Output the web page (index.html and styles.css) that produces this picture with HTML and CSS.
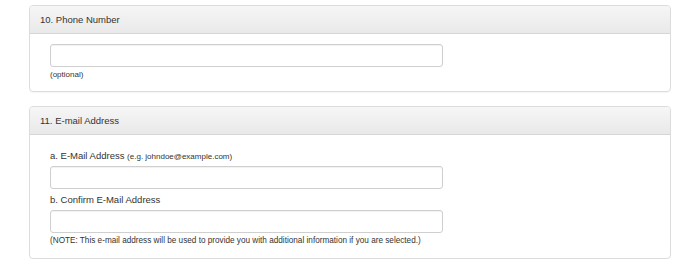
FILE: index.html
```html
<!DOCTYPE html>
<html lang="en">
<head>
    <meta charset="UTF-8">
    <title>Application Form</title>
    <link rel="stylesheet" href="styles.css">
</head>
<body>
    <div class="form-wrap">
        <!-- Phone -->
        <div class="panel">
            <div class="panel-heading">10. Phone Number</div>
            <div class="panel-body phone">
                <input type="text" class="field">
                <p class="help">(optional)</p>
            </div>
        </div>

        <!-- Email -->
        <div class="panel">
            <div class="panel-heading">11. E-mail Address</div>
            <div class="panel-body email">
                <label class="label">a. E-Mail Address <small>(e.g. johndoe@example.com)</small></label>
                <input type="text" class="field">
                <label class="label">b. Confirm E-Mail Address</label>
                <input type="text" class="field">
                <p class="help note">(NOTE: This e-mail address will be used to provide you with additional information if you are selected.)</p>
            </div>
        </div>
    </div>
</body>
</html>
```

FILE: styles.css
```css
body {
    font-family: 'Liberation Sans', Arial, sans-serif;
    color: #333;
    background-color: #fff;
    margin: 0;
}

.form-wrap {
    width: 642px;
    margin-left: 29px;
    padding-top: 5px;
    display: flex;
    flex-direction: column;
    gap: 14px;
}

.panel {
    border: 1px solid #dcdcdc;
    border-radius: 4px;
    box-shadow: 0 1px 1px rgba(0, 0, 0, 0.04);
    overflow: hidden;
}

.panel-heading {
    height: 27px;
    line-height: 27px;
    padding-left: 10px;
    font-size: 9.5px;
    color: #333;
    background: linear-gradient(to bottom, #f6f6f6, #e9e9e9);
    border-bottom: 1px solid #d6d6d6;
}

.panel-body {
    display: flex;
    flex-direction: column;
    align-items: flex-start;
}

.panel-body.phone {
    padding: 10px 20px 11px;
}

.panel-body.email {
    padding: 14px 20px 12px;
}

.field {
    width: 393px;
    height: 23px;
    box-sizing: border-box;
    border: 1px solid #cfcfcf;
    border-radius: 3px;
    box-shadow: inset 0 1px 1px rgba(0, 0, 0, 0.06);
    margin: 0;
}

.label {
    font-size: 9.5px;
    line-height: 13px;
    margin: 0 0 3px;
}

.field + .label {
    margin-top: 4px;
    margin-bottom: 4px;
}

.label small {
    font-size: 8px;
}

.help {
    font-size: 8px;
    line-height: 10px;
    margin: 3px 0 0;
}

.help.note {
    font-size: 8.2px;
}
```
